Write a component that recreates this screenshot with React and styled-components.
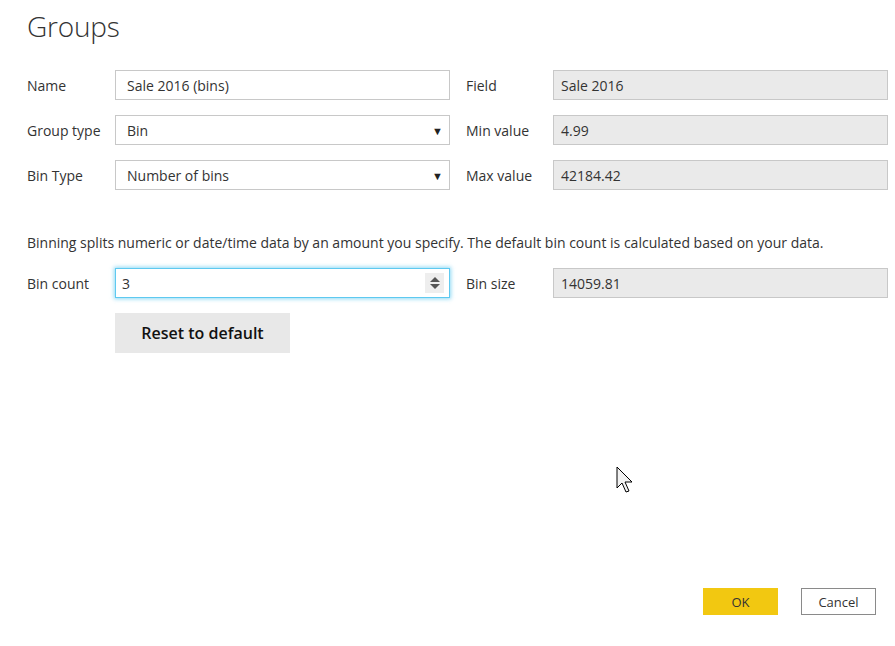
import React from "react";
import styled, { createGlobalStyle } from "styled-components";

const Global = createGlobalStyle`
  html, body {
    margin: 0;
    padding: 0;
    background: #ffffff;
  }
  body {
    font-family: "Open Sans", "Noto Sans", "Liberation Sans", sans-serif;
    color: #333333;
  }
`;

function App() {
  return (
    <Page>
      <Global />
      <Title>Groups</Title>
      <Form>
        <Label>Name</Label>
        <Field>Sale 2016 (bins)</Field>
        <Label right>Field</Label>
        <Field readOnly>Sale 2016</Field>

        <Label>Group type</Label>
        <Field>
          Bin
          <Caret>▼</Caret>
        </Field>
        <Label right>Min value</Label>
        <Field readOnly>4.99</Field>

        <Label>Bin Type</Label>
        <Field>
          Number of bins
          <Caret>▼</Caret>
        </Field>
        <Label right>Max value</Label>
        <Field readOnly>42184.42</Field>
      </Form>

      <Note>
        Binning splits numeric or date/time data by an amount you specify. The
        default bin count is calculated based on your data.
      </Note>

      <Form tight>
        <Label>Bin count</Label>
        <Field focused>
          3
          <Spinner>
            <svg width="12" height="16" viewBox="0 0 12 16">
              <path d="M6 2 L11 7 L1 7 Z" fill="#555" />
              <path d="M6 14 L11 9 L1 9 Z" fill="#555" />
            </svg>
          </Spinner>
        </Field>
        <Label right>Bin size</Label>
        <Field readOnly>14059.81</Field>
      </Form>

      <ResetRow>
        <ResetButton>Reset to default</ResetButton>
      </ResetRow>

      <Footer>
        <Button primary>OK</Button>
        <Button>Cancel</Button>
      </Footer>

      <Cursor>
        <svg width="20" height="28" viewBox="0 0 20 28">
          <path
            d="M1 1 L1 22 L6 17 L10 26 L13 25 L9 16 L16 16 Z"
            fill="#f2f2f2"
            stroke="#000"
            strokeWidth="1"
          />
        </svg>
      </Cursor>
    </Page>
  );
}

export default App;

const Page = styled.div`
  position: relative;
  box-sizing: border-box;
  height: 646px;
  padding: 8px 7px 31px 27px;
  display: flex;
  flex-direction: column;
  overflow: hidden;
`;

const Title = styled.h1`
  margin: 0;
  font-family: "Open Sans", "Noto Sans", sans-serif;
  font-weight: 300;
  font-size: 28px;
  line-height: 36px;
  color: #333;
  letter-spacing: -0.2px;
`;

const Form = styled.div`
  display: grid;
  grid-template-columns: 88px 335px 16px 87px 335px;
  grid-auto-rows: 30px;
  row-gap: 15px;
  margin-top: ${(p) => (p.tight ? "15px" : "26px")};
`;

const Label = styled.div`
  grid-column: ${(p) => (p.right ? "4" : "1")};
  display: flex;
  align-items: center;
  font-size: 14px;
  color: #333;
`;

const Field = styled.div`
  position: relative;
  grid-column: ${(p) => (p.readOnly ? "5" : "2")};
  box-sizing: border-box;
  display: flex;
  align-items: center;
  padding: 0 ${(p) => (p.readOnly ? "7px" : "11px")};
  padding-left: ${(p) => (p.focused ? "6px" : p.readOnly ? "7px" : "11px")};
  font-size: 14px;
  color: #333;
  background: ${(p) => (p.readOnly ? "#eaeaea" : "#ffffff")};
  border: 1px solid ${(p) => (p.focused ? "#5ec9f0" : "#c8c8c8")};
  box-shadow: ${(p) => (p.focused ? "0 0 4px 1px rgba(94, 201, 240, 0.7)" : "none")};
`;

const Caret = styled.span`
  position: absolute;
  right: 6px;
  top: 50%;
  transform: translateY(-50%);
  font-size: 11px;
  color: #222;
`;

const Spinner = styled.span`
  position: absolute;
  right: 5px;
  top: 4px;
  width: 19px;
  height: 20px;
  background: #eeeeee;
  display: flex;
  align-items: center;
  justify-content: center;
`;

const Note = styled.p`
  margin: 43px 0 0;
  font-size: 14px;
  line-height: 20px;
  color: #333;
  white-space: nowrap;
`;

const ResetRow = styled.div`
  padding-left: 88px;
  margin-top: 15px;
`;

const ResetButton = styled.button`
  width: 175px;
  height: 40px;
  border: none;
  background: #e8e8e8;
  font-family: "Open Sans", "Noto Sans", sans-serif;
  font-size: 16px;
  font-weight: 600;
  color: #111;
  padding: 0;
`;

const Footer = styled.div`
  margin-top: auto;
  display: flex;
  justify-content: flex-end;
  gap: 23px;
  padding-right: 12px;
`;

const Button = styled.button`
  box-sizing: border-box;
  width: 75px;
  height: 27px;
  padding: 0;
  font-family: "Open Sans", "Noto Sans", sans-serif;
  font-size: 13px;
  color: #333;
  background: ${(p) => (p.primary ? "#f2c811" : "#ffffff")};
  border: ${(p) => (p.primary ? "none" : "1px solid #8a8a8a")};
`;

const Cursor = styled.div`
  position: absolute;
  left: 616px;
  top: 466px;
  pointer-events: none;
`;
